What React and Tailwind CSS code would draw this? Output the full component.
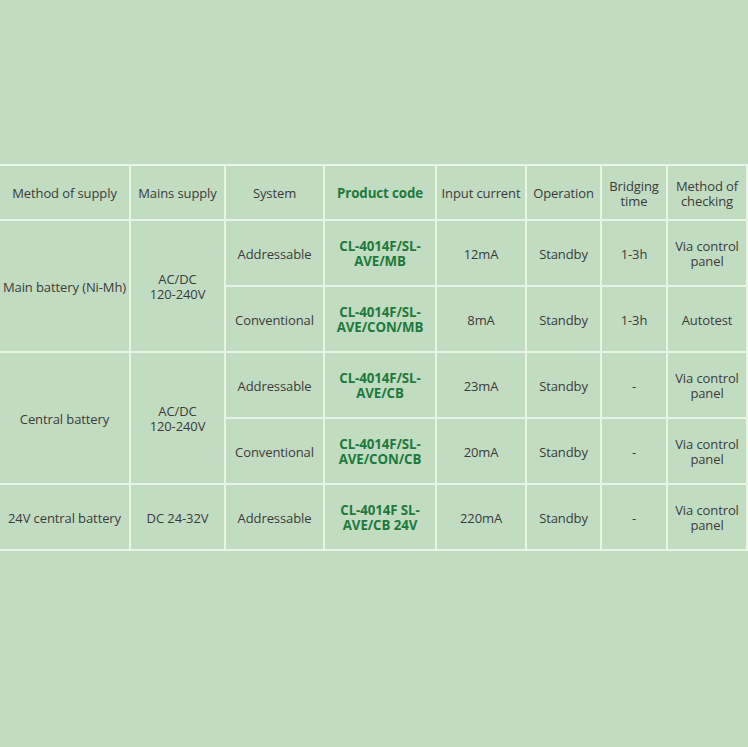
import React from "react";

const C = ({ children, className = "" }) => (
  <div className={"bg-[#c2dcc1] flex items-center justify-center text-center px-1 pt-[2px] leading-[15px] " + className}>
    {children}
  </div>
);
const G = ({ children, className = "" }) => (
  <C className={"text-[#1d7a3c] font-bold text-[13.3px] " + className}>{children}</C>
);

export default function App() {
  return (
    <div
      className="w-[748px] h-[747px] bg-[#c2dcc1] pt-[164px] text-[13px] text-[#3b3b3b]"
      style={{ fontFamily: '"Open Sans", "Liberation Sans", sans-serif' }}
    >
      <div className="grid grid-cols-[129px_93px_97px_110px_88px_73px_64px_78px] grid-rows-[53px_64px_64px_64px_64px_64px] gap-[2px] bg-[#e8f4e5] py-[2px] pr-[2px] tracking-[-0.1px]">
        <C>Method of supply</C>
        <C>Mains supply</C>
        <C>System</C>
        <G>Product code</G>
        <C>Input current</C>
        <C>Operation</C>
        <C>Bridging<br />time</C>
        <C>Method of<br />checking</C>

        <C className="row-span-2 !px-0">Main battery (Ni-Mh)</C>
        <C className="row-span-2">AC/DC<br />120-240V</C>
        <C>Addressable</C>
        <G>CL-4014F/SL-<br />AVE/MB</G>
        <C>12mA</C>
        <C>Standby</C>
        <C>1-3h</C>
        <C>Via control<br />panel</C>

        <C>Conventional</C>
        <G>CL-4014F/SL-<br />AVE/CON/MB</G>
        <C>8mA</C>
        <C>Standby</C>
        <C>1-3h</C>
        <C>Autotest</C>

        <C className="row-span-2">Central battery</C>
        <C className="row-span-2">AC/DC<br />120-240V</C>
        <C>Addressable</C>
        <G>CL-4014F/SL-<br />AVE/CB</G>
        <C>23mA</C>
        <C>Standby</C>
        <C>-</C>
        <C>Via control<br />panel</C>

        <C>Conventional</C>
        <G>CL-4014F/SL-<br />AVE/CON/CB</G>
        <C>20mA</C>
        <C>Standby</C>
        <C>-</C>
        <C>Via control<br />panel</C>

        <C className="!px-0">24V central battery</C>
        <C>DC 24-32V</C>
        <C>Addressable</C>
        <G>CL-4014F SL-<br />AVE/CB 24V</G>
        <C>220mA</C>
        <C>Standby</C>
        <C>-</C>
        <C>Via control<br />panel</C>
      </div>
    </div>
  );
}
